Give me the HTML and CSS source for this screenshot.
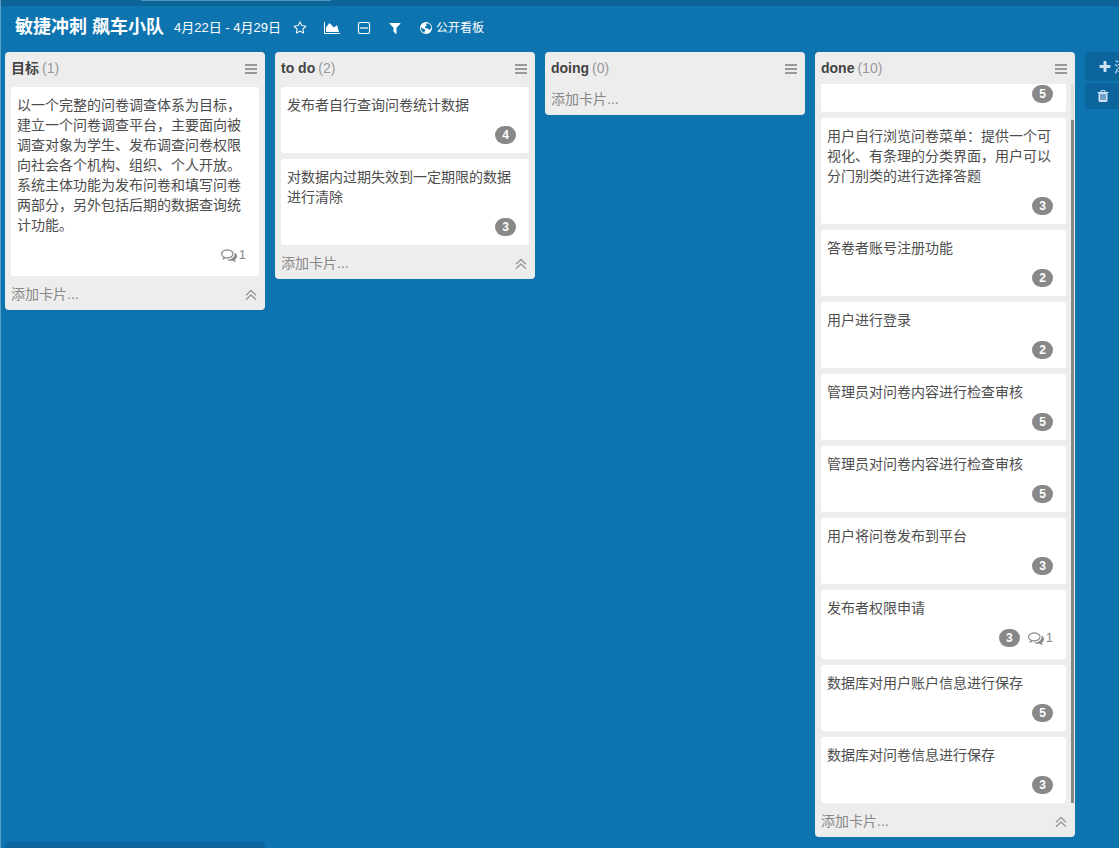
FILE: index.html
```html
<!DOCTYPE html>
<html lang="zh-CN">
<head>
<meta charset="utf-8">
<title>敏捷冲刺 飙车小队</title>
<link rel="stylesheet" href="styles.css">
</head>
<body>
<svg class="sprite" aria-hidden="true">
  <symbol id="bars" viewBox="0 0 12 12"><path d="M0 1h12v2H0zM0 5h12v2H0zM0 9h12v2H0z"/></symbol>
  <symbol id="up" viewBox="0 0 12 12"><path d="M1 6.200l5-4.700 5 4.700M1 10.700l5-4.700 5 4.700" fill="none" stroke="currentColor" stroke-width="1.400"/></symbol>
  <symbol id="comments" viewBox="0 0 1792 1792"><path d="M704 384q-153 0-286 52t-211.500 141-78.500 191q0 82 53 158t149 132l97 56-35 84q34-20 62-39l44-31 53 10q78 14 153 14 153 0 286-52t211.500-141 78.500-191-78.500-191-211.500-141-286-52zm0-128q191 0 353.500 68.500t256.500 186.500 94 257-94 257-256.500 186.500-353.500 68.500q-86 0-176-16-124 88-278 128-36 9-86 16h-3q-11 0-20.500-8t-11.500-21q-1-3-1-6.500t.5-6.500 2-6l2.500-5 3.500-5.500 4-5 4.500-5 4-4.500q5-6 23-25t26-29.500 22.500-29 25-38.500 20.500-44q-124-72-195-177t-71-224q0-139 94-257t256.500-186.500 353.500-68.500zm822 1169q10 24 20.500 44t25 38.500 22.500 29 26 29.500 23 25q1 1 4 4.500t4.500 5 4 5 3.500 5.500l2.500 5 2 6 .5 6.500-1 6.500q-3 14-13 22t-22 7q-50-7-86-16-154-40-278-128-90 16-176 16-271 0-472-132 58 4 88 4 161 0 309-45t264-129q125-92 192-212t67-254q0-77-23-152 129 71 204 178t75 230q0 120-71 224.500t-195 176.500z"/></symbol>
</svg>
<div class="topbar"><div class="topbar-search"></div></div>
<header class="board-header">
  <h1 class="board-title">敏捷冲刺 飙车小队</h1>
  <span class="board-dates">4月22日 - 4月29日</span>
  <nav class="tools">
    <button class="tool" aria-label="收藏"><svg class="icon" viewBox="0 0 1792 1792"><path d="M1201 1004l306-297-422-62-189-382-189 382-422 62 306 297-73 421 378-199 377 199zm527-357q0 22-26 48l-363 354 86 500q1 7 1 20 0 50-41 50-19 0-40-12l-449-236-449 236q-22 12-40 12-21 0-31.500-14.500t-10.500-35.500q0-6 2-20l86-500-364-354q-25-27-25-48 0-37 56-46l502-73 225-455q19-41 49-41t49 41l225 455 502 73q56 9 56 46z"/></svg></button>
    <button class="tool" aria-label="图表"><svg class="icon icon-wide" viewBox="0 0 2048 1792"><path d="M2048 1536v128h-2048v-1536h128v1408h1920zm-384-1024l256 896h-1664v-576l448-576 576 576z"/></svg></button>
    <button class="tool" aria-label="折叠"><svg class="icon" viewBox="0 0 14 14"><rect x="1.500" y="1.500" width="11" height="11" rx="1.500" fill="none" stroke="currentColor" stroke-width="1.200"/><path d="M3 6.400h8v1.200H3z"/></svg></button>
    <button class="tool" aria-label="筛选"><svg class="icon" viewBox="0 0 1792 1792"><path d="M1595 295q17 41-14 70l-493 493v742q0 42-39 59-13 5-25 5-27 0-45-19l-256-256q-19-19-19-45v-486l-493-493q-31-29-14-70 17-39 59-39h1280q42 0 59 39z"/></svg></button>
    <button class="tool tool-public"><svg class="icon" viewBox="0 0 14 14"><circle cx="7" cy="7" r="6"/><path class="land" d="M7.600 2.200l2.600.5 1.700 2.300.3 2.600-1.500 1-1.600-.2-.8-1.300-1.600.4-.9-1.100.9-1.400 1.300-.3-.9-1zM1.900 6.300l1.900 1.200 1.800.8.9 1.200-1 1-.2 1.600-2-1.500-1.200-2z"/></svg>公开看板</button>
  </nav>
</header>
<main class="board">
  <section class="list">
    <div class="list-head"><h2 class="list-name">目标</h2><span class="count">(1)</span><button class="menu" aria-label="菜单"><svg class="icon-small"><use href="#bars"/></svg></button></div>
    <div class="cards">
      <article class="card"><p class="card-text">以一个完整的问卷调查体系为目标，建立一个问卷调查平台，主要面向被调查对象为学生、发布调查问卷权限向社会各个机构、组织、个人开放。系统主体功能为发布问卷和填写问卷两部分，另外包括后期的数据查询统计功能。</p><div class="meta meta-comments"><span class="comments"><svg class="icon-comments"><use href="#comments"/></svg>1</span></div></article>
    </div>
    <div class="list-foot"><button class="add">添加卡片...</button><button class="menu" aria-label="收起"><svg class="icon-small"><use href="#up"/></svg></button></div>
  </section>
  <section class="list">
    <div class="list-head"><h2 class="list-name">to do</h2><span class="count">(2)</span><button class="menu" aria-label="菜单"><svg class="icon-small"><use href="#bars"/></svg></button></div>
    <div class="cards">
      <article class="card"><p class="card-text">发布者自行查询问卷统计数据</p><div class="meta"><span class="badge">4</span></div></article>
      <article class="card"><p class="card-text">对数据内过期失效到一定期限的数据进行清除</p><div class="meta"><span class="badge">3</span></div></article>
    </div>
    <div class="list-foot"><button class="add">添加卡片...</button><button class="menu" aria-label="收起"><svg class="icon-small"><use href="#up"/></svg></button></div>
  </section>
  <section class="list">
    <div class="list-head"><h2 class="list-name">doing</h2><span class="count">(0)</span><button class="menu" aria-label="菜单"><svg class="icon-small"><use href="#bars"/></svg></button></div>
    <div class="list-foot"><button class="add">添加卡片...</button></div>
  </section>
  <section class="list">
    <div class="list-head"><h2 class="list-name">done</h2><span class="count">(10)</span><button class="menu" aria-label="菜单"><svg class="icon-small"><use href="#bars"/></svg></button></div>
    <div class="cards cards-scrolled">
      <article class="card"><p class="card-text"></p><div class="meta"><span class="badge">5</span></div></article>
      <article class="card"><p class="card-text">用户自行浏览问卷菜单：提供一个可视化、有条理的分类界面，用户可以分门别类的进行选择答题</p><div class="meta"><span class="badge">3</span></div></article>
      <article class="card"><p class="card-text">答卷者账号注册功能</p><div class="meta"><span class="badge">2</span></div></article>
      <article class="card"><p class="card-text">用户进行登录</p><div class="meta"><span class="badge">2</span></div></article>
      <article class="card"><p class="card-text">管理员对问卷内容进行检查审核</p><div class="meta"><span class="badge">5</span></div></article>
      <article class="card"><p class="card-text">管理员对问卷内容进行检查审核</p><div class="meta"><span class="badge">5</span></div></article>
      <article class="card"><p class="card-text">用户将问卷发布到平台</p><div class="meta"><span class="badge">3</span></div></article>
      <article class="card"><p class="card-text">发布者权限申请</p><div class="meta meta-comments"><span class="badge">3</span><span class="comments"><svg class="icon-comments"><use href="#comments"/></svg>1</span></div></article>
      <article class="card"><p class="card-text">数据库对用户账户信息进行保存</p><div class="meta"><span class="badge">5</span></div></article>
      <article class="card"><p class="card-text">数据库对问卷信息进行保存</p><div class="meta"><span class="badge">3</span></div></article>
      <div class="track"><div class="thumb"></div></div>
    </div>
    <div class="list-foot"><button class="add">添加卡片...</button><button class="menu" aria-label="收起"><svg class="icon-small"><use href="#up"/></svg></button></div>
  </section>
  <aside class="side">
    <button class="side-button"><svg class="icon" viewBox="0 0 1792 1792"><path d="M1600 736v192q0 40-28 68t-68 28h-416v416q0 40-28 68t-68 28h-192q-40 0-68-28t-28-68v-416h-416q-40 0-68-28t-28-68v-192q0-40 28-68t68-28h416v-416q0-40 28-68t68-28h192q40 0 68 28t28 68v416h416q40 0 68 28t28 68z"/></svg>添加列表</button>
    <button class="side-button side-trash" aria-label="回收站"><svg class="icon" viewBox="0 0 1792 1792"><path d="M704 1376v-704q0-14-9-23t-23-9h-64q-14 0-23 9t-9 23v704q0 14 9 23t23 9h64q14 0 23-9t9-23zm256 0v-704q0-14-9-23t-23-9h-64q-14 0-23 9t-9 23v704q0 14 9 23t23 9h64q14 0 23-9t9-23zm256 0v-704q0-14-9-23t-23-9h-64q-14 0-23 9t-9 23v704q0 14 9 23t23 9h64q14 0 23-9t9-23zm-544-992h448l-48-117q-7-9-17-11h-317q-10 2-17 11zm928 32v64q0 14-9 23t-23 9h-96v948q0 83-47 143.500t-113 60.500h-832q-66 0-113-58.500t-47-141.500v-952h-96q-14 0-23-9t-9-23v-64q0-14 9-23t23-9h309l70-167q15-37 54-63t79-26h320q40 0 79 26t54 63l70 167h309q14 0 23 9t9 23z"/></svg></button>
  </aside>
</main>
<footer class="bottom-bar"></footer>
</body>
</html>
```
FILE: styles.css
```css
* { box-sizing: border-box; }
body {
  margin: 0;
  height: 100vh;
  overflow: hidden;
  display: flex;
  flex-direction: column;
  background: #0e74af;
  border-left: 1px solid #5a9fca;
  font: 14px/20px "Liberation Sans", "Noto Sans CJK SC", sans-serif;
  color: #4d4d4d;
}
h1, h2, p { margin: 0; }
button { border: 0; padding: 0; background: none; font: inherit; color: inherit; cursor: pointer; }
svg { display: block; fill: currentColor; flex: none; }
.sprite { display: none; }
.topbar { flex: none; height: 6px; background: #0b6398; padding-left: 140px; }
.topbar-search { width: 190px; height: 1px; background: #4f93bd; }
.board-header {
  flex: none;
  height: 46px;
  display: flex;
  align-items: center;
  padding: 0 14px 4px;
  color: #fff;
  white-space: nowrap;
}
.board-title { font-size: 18px; line-height: 24px; font-weight: 700; }
.board-dates { margin: 2px 12px 0 10px; font-size: 13px; }
.tools { display: flex; align-items: center; gap: 17px; margin-top: 2px; }
.tool { display: flex; align-items: center; gap: 3px; font-size: 12px; }
.icon { width: 14px; height: 14px; }
.icon-wide { width: 16px; }
.land { fill: #0e74af; }
.board {
  flex: 1;
  min-height: 0;
  display: flex;
  align-items: flex-start;
  gap: 10px;
  padding: 0 0 5px 4px;
  overflow: hidden;
}
.list {
  flex: none;
  width: 260px;
  max-height: 100%;
  display: flex;
  flex-direction: column;
  background: #ededed;
  border-radius: 4px;
}
.list-head { flex: none; display: flex; align-items: center; height: 32px; padding: 0 8px 0 6px; }
.list-head .menu { padding-top: 2px; }
.list-name { font-size: 14px; font-weight: 700; line-height: 20px; color: #444; }
.count { margin-left: 3px; color: #999; }
.menu { margin-left: auto; color: #999; }
.icon-small { width: 12px; height: 12px; }
.cards { min-height: 0; display: flex; flex-direction: column; gap: 6px; margin-bottom: 3px; padding: 3px 6px 0; }
.cards-scrolled { position: relative; overflow: hidden; justify-content: flex-end; padding-right: 9px; }
.card { flex: none; background: #fff; border-radius: 3px; padding: 8px 13px 8px 6px; }
.card-text { min-height: 20px; margin-right: -1px; }
.meta { display: flex; justify-content: flex-end; align-items: center; gap: 8px; height: 20px; margin-top: 10px; }
.meta-comments { margin-bottom: 3px; }
.badge { width: 21px; height: 18px; border-radius: 9px; background: #888; color: #fff; font-size: 12px; line-height: 18px; font-weight: 700; text-align: center; }
.comments { display: flex; align-items: center; gap: 2px; color: #888; font-size: 13px; }
.icon-comments { width: 16px; height: 16px; }
.track { position: absolute; top: 0; right: 1px; bottom: 0; width: 3px; background: #dedede; }
.thumb { height: 95%; margin-top: 36px; background: #888; }
.list-foot { flex: none; display: flex; align-items: center; height: 31px; padding: 0 8px 2px 6px; color: #888; }
.list-foot .menu { padding-top: 2px; }
.side { flex: 1 0 0; min-width: 0; overflow: hidden; display: flex; flex-direction: column; gap: 2px; }
.side-button { display: flex; align-items: center; gap: 2px; height: 29px; padding-left: 13px; border-radius: 4px 0 0 4px; background: #0b659c; color: #cfe0f5; white-space: nowrap; overflow: hidden; }
.side-trash { height: 26px; padding-left: 11px; }
.bottom-bar { flex: none; width: 260px; height: 6px; margin-left: 4px; border-radius: 4px 4px 0 0; background: #0b659c; }
```
